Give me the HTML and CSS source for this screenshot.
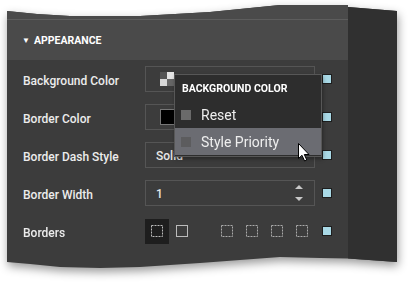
FILE: index.html
```html
<!DOCTYPE html>
<html>
<head>
    <title>Appearance</title>
    <link rel="stylesheet" href="styles.css">
</head>
<body>
    <div class="sheet">
        <div class="panel">
            <div class="main">
                <div class="top"></div>
                <div class="section-head"><span class="caret">&#9660;</span>APPEARANCE</div>

                <div class="row">
                    <div class="label">Background Color</div>
                    <div class="field"><span class="checker"><i></i><i></i><i></i><i></i></span></div>
                    <span class="marker"></span>
                </div>
                <div class="row">
                    <div class="label">Border Color</div>
                    <div class="field"><span class="swatch"></span></div>
                    <span class="marker"></span>
                </div>
                <div class="row">
                    <div class="label">Border Dash Style</div>
                    <div class="field"><span class="value">Solid</span></div>
                    <span class="marker"></span>
                </div>
                <div class="row">
                    <div class="label">Border Width</div>
                    <div class="field">
                        <span class="value">1</span>
                        <svg class="spin" width="10" height="18" viewBox="0 0 10 18">
                            <path d="M1 5 L5 1 L9 5 Z" fill="#c8c8c8"/>
                            <path d="M1 13 L5 17 L9 13 Z" fill="#c8c8c8"/>
                        </svg>
                    </div>
                    <span class="marker"></span>
                </div>
                <div class="row">
                    <div class="label">Borders</div>
                    <div class="borders">
                        <span class="cell selected"><svg width="12" height="12" viewBox="0 0 12 12"><rect x="0.5" y="0.5" width="11" height="11" fill="none" stroke="#bbb" stroke-dasharray="2 1"/></svg></span>
                        <span class="cell"><svg width="12" height="12" viewBox="0 0 12 12"><rect x="0.5" y="0.5" width="11" height="11" fill="none" stroke="#bbb"/></svg></span>
                        <span class="cell group"><svg width="12" height="12" viewBox="0 0 12 12"><rect x="0.5" y="0.5" width="11" height="11" fill="none" stroke="#aaa" stroke-dasharray="2 1"/></svg></span>
                        <span class="cell"><svg width="12" height="12" viewBox="0 0 12 12"><rect x="0.5" y="0.5" width="11" height="11" fill="none" stroke="#aaa" stroke-dasharray="2 1"/></svg></span>
                        <span class="cell"><svg width="12" height="12" viewBox="0 0 12 12"><rect x="0.5" y="0.5" width="11" height="11" fill="none" stroke="#aaa" stroke-dasharray="2 1"/></svg></span>
                        <span class="cell"><svg width="12" height="12" viewBox="0 0 12 12"><rect x="0.5" y="0.5" width="11" height="11" fill="none" stroke="#aaa" stroke-dasharray="2 1"/></svg></span>
                    </div>
                    <span class="marker"></span>
                </div>
            </div>
            <div class="strip"></div>

            <!-- context menu over the color field -->
            <div class="popup">
                <div class="popup-title">BACKGROUND COLOR</div>
                <div class="item"><span class="box"></span>Reset</div>
                <div class="item hover"><span class="box"></span>Style Priority</div>
            </div>

            <svg class="cursor" width="13" height="19" viewBox="0 0 13 19">
                <path d="M0.5 0.5 L0.5 15.5 L4 12.3 L6.6 18 L8.8 17 L6.3 11.5 L11 11.5 Z" fill="#fff" stroke="#000" stroke-width="1"/>
            </svg>
        </div>
    </div>
</body>
</html>
```

FILE: styles.css
```css
body { margin: 0; background: #fff; font-family: Roboto, "Noto Sans", sans-serif; }
.sheet { width: 410px; height: 284px; filter: drop-shadow(1px 4px 5px rgba(0,0,0,0.4)); }
.panel {
    position: relative; margin-left: 7px; width: 390px; height: 270px; display: flex; background: #3c3c3c;
    clip-path: polygon(0 11px, 30px 14px, 63px 16px, 133px 16px, 203px 12px, 273px 5px, 341px 5px, 341px 7px, 390px 11px,
        390px 262px, 341px 258.5px, 313px 258px, 273px 257px, 193px 263px, 133px 267px, 93px 268px, 53px 267px, 23px 264px, 0 262px);
}
.main { width: 341px; }
.strip { flex: 1; background: #303030; }
.top { height: 19px; background: #4a4a4a; border-bottom: 1px solid #5d5d5d; }
.section-head { height: 40px; background: #4a4a4a; display: flex; align-items: center; padding-left: 15px; color: #fff; font-weight: bold; font-size: 10.5px; }
.caret { font-size: 8px; margin-right: 4px; }
.row { height: 38px; display: flex; align-items: center; padding-left: 16px; }
.label { width: 122px; color: #ececec; font-size: 12px; font-weight: 500; padding-top: 3px; }
.field { width: 154px; height: 24px; border: 1px solid #555; display: flex; align-items: center; padding-left: 14px; }
.value { color: #e6e6e6; font-size: 12px; font-weight: 500; flex: 1; margin-left: -4px; padding-top: 2px; }
.spin { margin-right: 10px; }
.marker { width: 8px; height: 8px; background: #a9d9e6; border: 1px solid #1e1e1e; margin-left: 7px; }
.checker { display: grid; grid-template-columns: 7px 7px; grid-template-rows: 7px 7px; width: 14px; height: 14px; }
.checker i:nth-child(1) { background: #555; }
.checker i:nth-child(2) { background: #e4e4e4; }
.checker i:nth-child(3) { background: #d8d8d8; }
.checker i:nth-child(4) { background: #666; }
.swatch { width: 14px; height: 14px; background: #000; border: 1px solid #777; }
.borders { width: 170px; display: flex; align-items: center; }
.cell { width: 25px; height: 25px; margin-right: 1px; display: flex; align-items: center; justify-content: center; }
.cell.selected { background: #1e1e1e; }
.cell.group { margin-left: 20px; }
.popup { position: absolute; left: 167px; top: 74px; width: 146px; background: #2d2d2d; border: 1px solid #575757; padding-bottom: 1px; box-shadow: 1px 2px 4px rgba(0,0,0,0.35); }
.popup-title { height: 26px; display: flex; align-items: center; padding-left: 7px; color: #fff; font-weight: bold; font-size: 10.5px; }
.item { height: 27px; display: flex; align-items: center; padding-left: 6px; color: #eee; font-size: 14px; }
.item.hover { background: #6b6c72; }
.box { width: 10px; height: 10px; background: #6a6a6a; margin-right: 10px; }
.item.hover .box { background: #5c5c5e; }
.cursor { position: absolute; left: 291px; top: 143px; }
```
